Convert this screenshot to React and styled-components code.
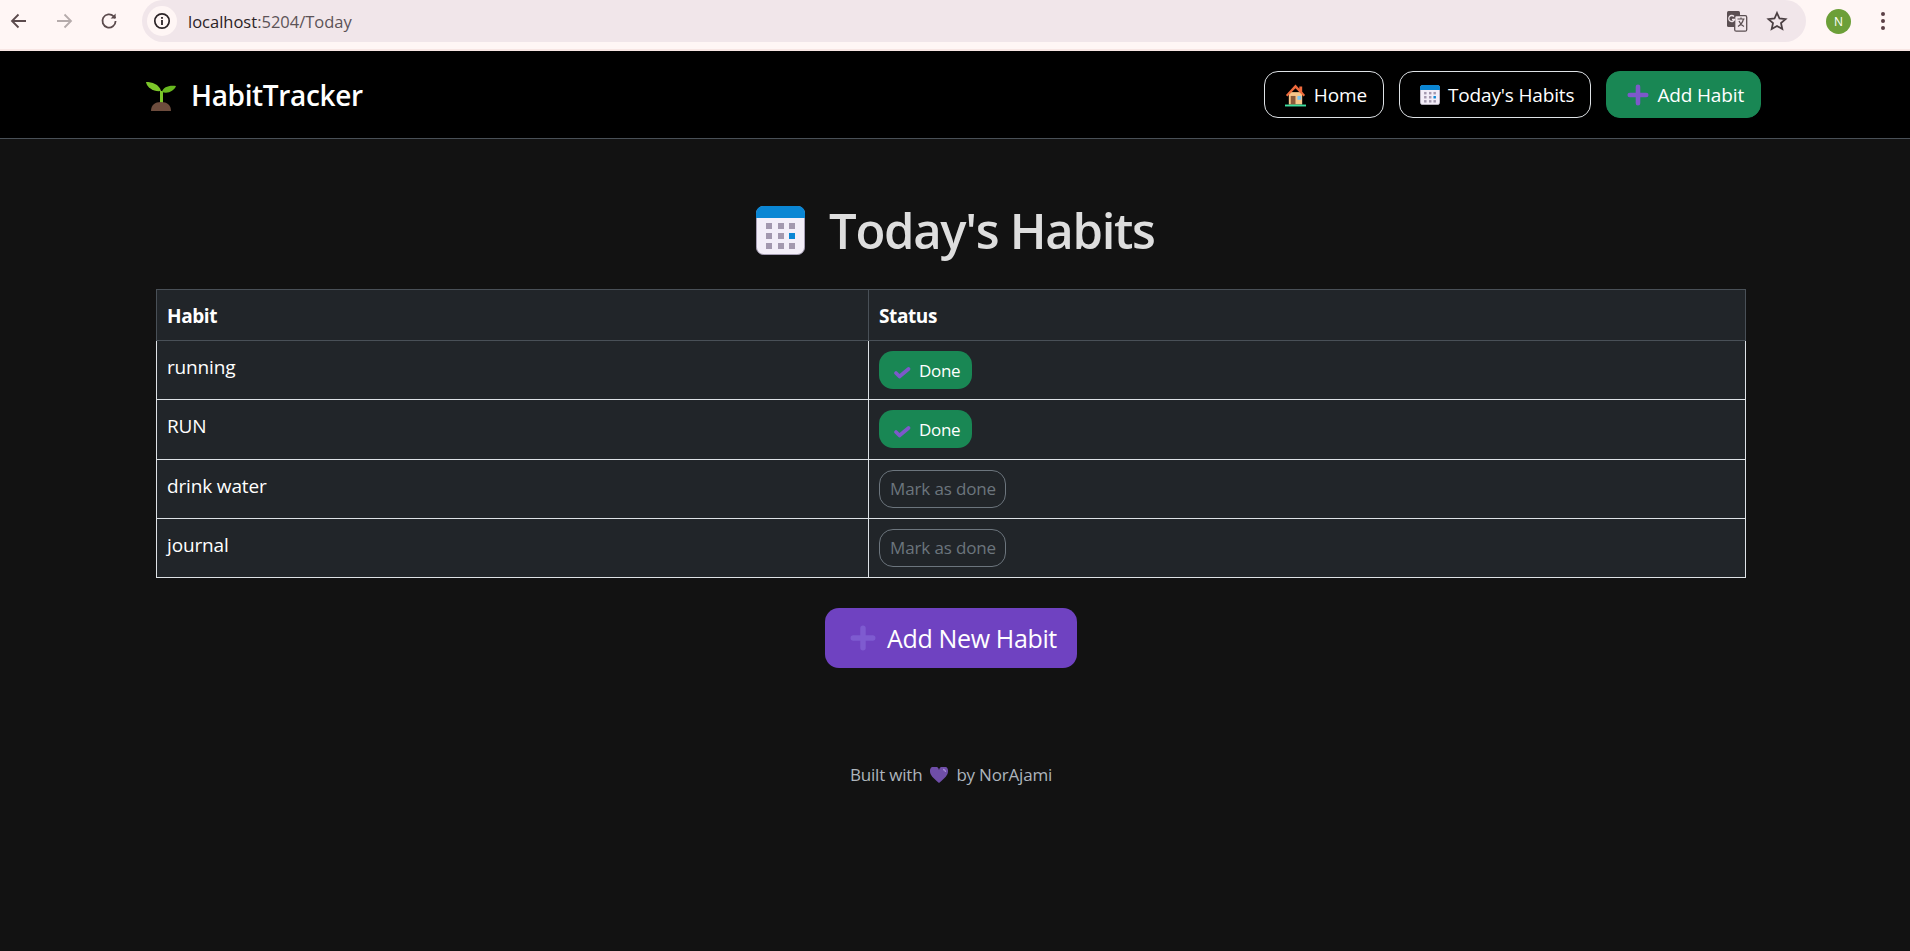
import styled, { createGlobalStyle } from "styled-components";

const GlobalStyle = createGlobalStyle`
  html, body { margin: 0; padding: 0; background: #121212; }
  body { font-family: "Open Sans", "Noto Sans", sans-serif; color: #fff; }
  * { box-sizing: border-box; }
`;

const Page = styled.div`
  height: 951px;
  overflow: hidden;
  background: #121212;
`;

const BrowserBar = styled.div`
  height: 51px;
  background: #fff6f5;
  border-bottom: 2px solid #f8e6e4;
  display: flex;
  align-items: flex-start;
`;

const NavButtons = styled.div`
  width: 142px;
  height: 42px;
  padding-left: 8px;
  display: flex;
  align-items: center;
  gap: 23px;
  flex: none;
`;

const AddressPill = styled.div`
  width: 1664px;
  height: 42px;
  background: #f1e6ea;
  border-radius: 21px;
  display: flex;
  align-items: center;
  padding: 0 18px 0 5px;
  flex: none;
`;

const InfoChip = styled.div`
  width: 30px;
  height: 30px;
  border-radius: 50%;
  background: #fff6f5;
  display: flex;
  align-items: center;
  justify-content: center;
  margin-right: 11px;
`;

const Url = styled.span`
  font-size: 16.5px;
  color: #2b2326;
  flex: 1;

  span { color: #5c5357; }
`;

const PillIcons = styled.div`
  display: flex;
  align-items: center;
  gap: 18px;
`;

const ProfileArea = styled.div`
  flex: 1;
  height: 42px;
  display: flex;
  align-items: center;
  padding-left: 20px;
  gap: 29px;
`;

const Avatar = styled.div`
  width: 25px;
  height: 25px;
  border-radius: 50%;
  background: #6c9f38;
  color: #fff;
  font-size: 12px;
  display: flex;
  align-items: center;
  justify-content: center;
`;

const Navbar = styled.nav`
  height: 88px;
  background: #000;
  border-bottom: 1px solid #495057;
  display: flex;
  align-items: center;
  justify-content: space-between;
  padding: 0 149px 0 146px;
`;

const Brand = styled.div`
  display: flex;
  align-items: center;
  gap: 15px;
  font-size: 28px;
  font-weight: 600;
  letter-spacing: -0.35px;
  padding-top: 1px;
`;

const NavLinks = styled.div`
  display: flex;
  gap: 15px;
`;

const NavLink = styled.a`
  height: 47px;
  padding: 1px 16px 0 20px;
  border-radius: 14px;
  border: 1px solid ${(p) => (p.$solid ? "#198754" : "#dee2e6")};
  background: ${(p) => (p.$solid ? "#198754" : "transparent")};
  color: #fff;
  display: flex;
  align-items: center;
  gap: 8px;
  font-size: 19px;
  letter-spacing: -0.15px;
`;

const Main = styled.main`
  padding: 0 164px 0 156px;
`;

const Heading = styled.h1`
  margin: 0;
  height: 150px;
  padding: 66px 0 0 600px;
  display: flex;
  align-items: flex-start;
  gap: 24px;
  font-size: 49px;
  font-weight: 600;
  line-height: 50px;
  letter-spacing: -1.3px;
  color: #dedede;

  svg { margin-top: 1px; }
`;

const HabitTable = styled.table`
  width: 1590px;
  table-layout: fixed;
  border-collapse: collapse;
  background: #212529;
`;

const HeadCell = styled.th`
  height: 51px;
  padding: 2px 10px 0;
  border: 1px solid #495057;
  text-align: left;
  font-size: 19px;
  font-weight: 700;
  letter-spacing: -0.4px;
  width: ${(p) => p.$width || "auto"};
`;

const Cell = styled.td`
  height: 59.25px;
  padding: ${(p) => (p.$text ? "13px 10px" : "10px")};
  border: 1px solid #dee2e6;
  vertical-align: top;
  font-size: 19px;
  line-height: 26px;
  letter-spacing: -0.15px;
`;

const DonePill = styled.button`
  height: 38px;
  width: 93px;
  border: 0;
  border-radius: 14px;
  background: #198754;
  color: #fff;
  font: inherit;
  font-size: 17px;
  letter-spacing: -0.3px;
  display: flex;
  align-items: center;
  gap: 8px;
  padding: 1px 0 0 14px;
`;

const MarkPill = styled.button`
  height: 38px;
  width: 127px;
  border: 1px solid #6c757d;
  border-radius: 14px;
  background: transparent;
  color: #6c757d;
  font: inherit;
  font-size: 17px;
  letter-spacing: -0.15px;
  padding: 1px 0 0 1px;
`;

const AddRow = styled.div`
  display: flex;
  justify-content: center;
  padding-top: 30px;
  width: 1590px;
`;

const AddButton = styled.button`
  width: 252px;
  height: 60px;
  border: 0;
  border-radius: 14px;
  background: #6f42c1;
  color: #fff;
  font: inherit;
  font-size: 25px;
  letter-spacing: -0.35px;
  display: flex;
  align-items: center;
  gap: 11px;
  padding: 0 0 0 25px;
`;

const Footer = styled.footer`
  margin-top: 95px;
  width: 1590px;
  display: flex;
  justify-content: center;
  align-items: center;
  gap: 8px;
  font-size: 17px;
  letter-spacing: -0.2px;
  color: #adb5bd;
`;

const Back = ({ faded }) => (
  <svg width="22" height="22" viewBox="0 0 22 22" fill="none" stroke={faded ? "#b5abab" : "#5b4a4c"} strokeWidth="1.8">
    {faded ? <path d="M4 11h14M11.5 4.5L18 11l-6.5 6.5" /> : <path d="M18 11H4M10.5 4.5L4 11l6.5 6.5" />}
  </svg>
);

const Reload = () => (
  <svg width="22" height="22" viewBox="0 0 22 22" fill="none" stroke="#5b4a4c" strokeWidth="1.8">
    <path d="M17.6 11a6.6 6.6 0 1 1-1.9-4.7l1.7 1.7" />
    <path d="M17.6 3.6v5h-5" fill="#5b4a4c" stroke="none" />
  </svg>
);

const InfoIcon = () => (
  <svg width="18" height="18" viewBox="0 0 18 18" fill="none">
    <circle cx="9" cy="9" r="7.2" stroke="#2b2326" strokeWidth="1.7" />
    <rect x="8.1" y="8" width="1.8" height="5" fill="#2b2326" />
    <rect x="8.1" y="5" width="1.8" height="1.8" fill="#2b2326" />
  </svg>
);

const TranslateIcon = () => (
  <svg width="22" height="22" viewBox="0 0 22 22">
    <rect x="1" y="1" width="13" height="16" rx="1.5" fill="#5b4f52" />
    <rect x="8.7" y="5.7" width="12" height="15.5" rx="1.5" fill="#f1e6ea" stroke="#5b4f52" strokeWidth="1.3" />
    <path d="M8 6.5a3 3 0 1 0 .6 3H6" stroke="#f1e6ea" strokeWidth="1.3" fill="none" />
    <path d="M11.5 9h7M15 7.500V9M17.5 9c-.8 3.5-3 6-5.5 7.5M13 11c1 2.5 3 4.5 5 5.500" stroke="#5b4f52" strokeWidth="1.2" fill="none" />
  </svg>
);

const StarIcon = () => (
  <svg width="22" height="22" viewBox="0 0 22 22" fill="none" stroke="#4a3f42" strokeWidth="1.8">
    <path d="M11 3l2.5 5.5 6 .6-4.5 4 1.3 5.9L11 16l-5.3 3 1.3-5.9-4.5-4 6-.6z" />
  </svg>
);

const Kebab = () => (
  <svg width="6" height="22" viewBox="0 0 6 22" fill="#5b4046">
    <circle cx="3" cy="4" r="2" />
    <circle cx="3" cy="11" r="2" />
    <circle cx="3" cy="18" r="2" />
  </svg>
);

const Sprout = () => (
  <svg width="30" height="32" viewBox="0 0 30 32">
    <path d="M14 24V12h3v12z" fill="#7cc62a" />
    <path d="M15 12C13 5 6 3 0 3c1 6 8 10 15 9z" fill="#7cc62a" />
    <path d="M16 13c1-5 7-7 14-6-2 5-8 8-14 6z" fill="#68b81f" />
    <path d="M5 32c0-6 4-9 10-9s10 3 10 9z" fill="#6d4c3d" />
  </svg>
);

const HouseIcon = () => (
  <svg width="21" height="24" viewBox="0 0 22 24">
    <path d="M4 9h14v13H4z" fill="#f7c58a" />
    <path d="M11 1L1 12l1.500 1.500L11 5l8.500 8.500L21 12l-3-3.500V3h-3v2.500z" fill="#ef6a3c" />
    <path d="M6 13h5v9H6z" fill="#8a5a3a" />
    <path d="M13 13h4v4h-4z" fill="#7cc4ee" />
    <path d="M0 22h22v2H0z" fill="#3fe0a0" />
  </svg>
);

const CalendarIcon = ({ size }) => (
  <svg width={size} height={size} viewBox="0 0 49 49">
    <rect x="0.5" y="0.5" width="48" height="48" rx="7" fill="#f3eef8" stroke="#a79fb5" />
    <path d="M0 12V7a7 7 0 0 1 7-7h35a7 7 0 0 1 7 7v5z" fill="#0a86d4" />
    {[17, 27, 37].map((y) =>
      [10, 22, 33].map((x) => (
        <rect
          key={x + "-" + y}
          x={x}
          y={y}
          width="6"
          height="6"
          fill={x === 33 && y === 27 ? "#0a86d4" : "#a398ae"}
        />
      ))
    )}
  </svg>
);

const PlusIcon = ({ size, color }) => (
  <svg width={size} height={size} viewBox="0 0 24 24" fill="none" stroke={color} strokeWidth="5" strokeLinecap="round">
    <path d="M12 3v18M3 12h18" />
  </svg>
);

const CheckIcon = () => (
  <svg width="18" height="16" viewBox="0 0 18 16" fill="none" stroke="#7d58cb" strokeWidth="3.6" strokeLinecap="round" strokeLinejoin="round">
    <path d="M3 10l3.5 3.5L15.5 6" />
  </svg>
);

const HeartIcon = () => (
  <svg width="18" height="16" viewBox="0 0 18 16">
    <path d="M9 16C3 11 0 8 0 4.5A4.5 4.5 0 0 1 9 3a4.500 4.500 0 0 1 9 1.500C18 8 15 11 9 16z" fill="#6f4ea8" />
    <path d="M13 2.5a2.5 2.5 0 0 1 2.5 2.5" stroke="#a58ad6" strokeWidth="1.3" fill="none" />
  </svg>
);

const habits = [
  { name: "running", done: true },
  { name: "RUN", done: true },
  { name: "drink water", done: false },
  { name: "journal", done: false },
];

export default function App() {
  return (
    <Page>
      <GlobalStyle />
      <BrowserBar>
        <NavButtons>
          <Back />
          <Back faded />
          <Reload />
        </NavButtons>
        <AddressPill>
          <InfoChip>
            <InfoIcon />
          </InfoChip>
          <Url>
            localhost<span>:5204/Today</span>
          </Url>
          <PillIcons>
            <TranslateIcon />
            <StarIcon />
          </PillIcons>
        </AddressPill>
        <ProfileArea>
          <Avatar>N</Avatar>
          <Kebab />
        </ProfileArea>
      </BrowserBar>

      <Navbar>
        <Brand>
          <Sprout />
          HabitTracker
        </Brand>
        <NavLinks>
          <NavLink>
            <HouseIcon />
            Home
          </NavLink>
          <NavLink>
            <CalendarIcon size={20} />
            Today's Habits
          </NavLink>
          <NavLink $solid>
            <PlusIcon size={22} color="#7d58cb" />
            Add Habit
          </NavLink>
        </NavLinks>
      </Navbar>

      <Main>
        <Heading>
          <CalendarIcon size={49} />
          Today's Habits
        </Heading>
        <HabitTable>
          <thead>
            <tr>
              <HeadCell $width="712px">Habit</HeadCell>
              <HeadCell>Status</HeadCell>
            </tr>
          </thead>
          <tbody>
            {habits.map((habit) => (
              <tr key={habit.name}>
                <Cell $text>{habit.name}</Cell>
                <Cell>
                  {habit.done ? (
                    <DonePill>
                      <CheckIcon />
                      Done
                    </DonePill>
                  ) : (
                    <MarkPill>Mark as done</MarkPill>
                  )}
                </Cell>
              </tr>
            ))}
          </tbody>
        </HabitTable>
        <AddRow>
          <AddButton>
            <PlusIcon size={26} color="#7e5bd0" />
            Add New Habit
          </AddButton>
        </AddRow>
        <Footer>
          Built with
          <HeartIcon />
          by NorAjami
        </Footer>
      </Main>
    </Page>
  );
}
